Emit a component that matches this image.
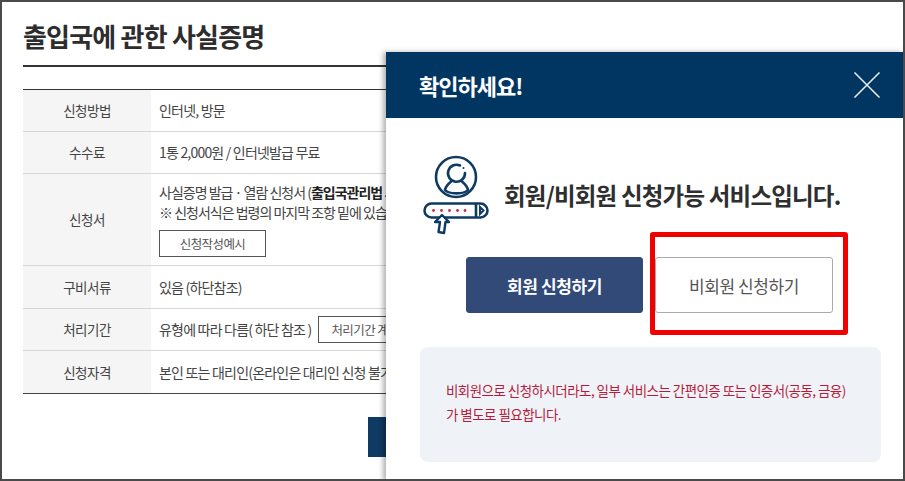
<script>
	const rows = [
		{ label: "신청방법", h: 42 },
		{ label: "수수료", h: 42 },
		{ label: "신청서", h: 92 },
		{ label: "구비서류", h: 43 },
		{ label: "처리기간", h: 42 },
		{ label: "신청자격", h: 43 }
	];
</script>

<div class="page">
	<main class="content">
		<h1>출입국에 관한 사실증명</h1>
		<div class="table">
			<div class="row r0">
				<div class="th">{rows[0].label}</div>
				<div class="td">인터넷, 방문</div>
			</div>
			<div class="row r1">
				<div class="th">{rows[1].label}</div>
				<div class="td">1통 2,000원 / 인터넷발급 무료</div>
			</div>
			<div class="row r2">
				<div class="th">{rows[2].label}</div>
				<div class="td stack">
					<p>사실증명 발급 · 열람 신청서 (<b>출입국관리법 시행규칙</b>)</p>
					<p>※ 신청서식은 법령의 마지막 조항 밑에 있습니다.</p>
					<button class="small">신청작성예시</button>
				</div>
			</div>
			<div class="row r3">
				<div class="th">{rows[3].label}</div>
				<div class="td">있음 (하단참조)</div>
			</div>
			<div class="row r4">
				<div class="th">{rows[4].label}</div>
				<div class="td">유형에 따라 다름( 하단 참조 )<button class="small calc">처리기간 계산하기</button></div>
			</div>
			<div class="row r5">
				<div class="th">{rows[5].label}</div>
				<div class="td">본인 또는 대리인(온라인은 대리인 신청 불가)</div>
			</div>
		</div>
		<div class="submit"></div>
	</main>

	<section class="modal">
		<header>
			<h2>확인하세요!</h2>
			<svg class="close" width="28" height="28" viewBox="0 0 28 28">
				<path d="M1.5 1.5 L26.5 26.5 M26.5 1.5 L1.5 26.5" stroke="#e4ebf2" stroke-width="1.6" fill="none" />
			</svg>
		</header>
		<div class="body">
			<div class="notice">
				<svg class="icon" width="68" height="80" viewBox="0 0 68 80" fill="none" stroke="#0f3a63" stroke-width="2.6">
					<circle cx="33" cy="22" r="20" />
					<!-- head with a gap at the upper right, then the shoulders -->
					<path d="M37 10.500 A8.500 8.500 0 1 0 42 18" stroke-linecap="round" />
					<circle cx="40.500" cy="13" r="1" fill="#0f3a63" stroke="none" />
					<path d="M28 26.500 C25 29 22.500 31 22 35 C26 39.500 41 39.500 45 35 C44.500 31 42 29 39 26.500" stroke-linecap="round" />
					<rect x="1.500" y="48.500" width="63" height="14" rx="7" />
					<path d="M53 49 v13" />
					<path d="M57 52 l3.500 3.500 l-3.500 3.500 z" stroke-width="2" />
					<g fill="#c8284c" stroke="none">
						<circle cx="10.500" cy="55.500" r="1.400" />
						<circle cx="18.500" cy="55.500" r="1.400" />
						<circle cx="26.500" cy="55.500" r="1.400" />
						<circle cx="34.500" cy="55.500" r="1.400" />
						<circle cx="42" cy="55.500" r="1.400" />
					</g>
					<path d="M19 60 L26 67 H22.500 L21 78 L15.500 77 L17 67 H12 Z" fill="#fff" stroke-linejoin="round" stroke-width="2.400" />
				</svg>
				<p>회원/비회원 신청가능 서비스입니다.</p>
			</div>
			<div class="actions">
				<button class="primary">회원 신청하기</button>
				<button class="outline">비회원 신청하기</button>
			</div>
			<div class="info">
				<p>비회원으로 신청하시더라도, 일부 서비스는 간편인증 또는 인증서(공동, 금융)<br />가 별도로 필요합니다.</p>
			</div>
		</div>
	</section>

	<div class="highlight"></div>
</div>

<style>
	:global(body) {
		margin: 0;
		background: #fff;
	}

	.page {
		position: relative;
		width: 905px;
		height: 481px;
		box-sizing: border-box;
		border: 2px solid #4a4a4a;
		overflow: hidden;
		font-family: "Noto Sans CJK KR", "Noto Sans", sans-serif;
		color: #333;
		background: #fff;
	}

	.content {
		width: 363px;
		padding: 0 0 0 21px;
	}

	h1 {
		margin: 0;
		height: 65px;
		box-sizing: border-box;
		border-bottom: 2px solid #333;
		padding-top: 16px;
		font-size: 26px;
		line-height: 36px;
		font-weight: 700;
		letter-spacing: -0.8px;
		color: #2d2d2d;
		white-space: nowrap;
	}

	.table {
		margin-top: 22px;
		border-top: 1px solid #333;
		border-bottom: 1px solid #444;
	}

	.row {
		display: flex;
		border-bottom: 1px solid #d6d6d6;
		box-sizing: border-box;
	}

	.row:last-child {
		border-bottom: none;
	}

	.r0 { height: 42px; }
	.r1 { height: 42px; }
	.r2 { height: 92px; }
	.r3 { height: 43px; }
	.r4 { height: 42px; }
	.r5 { height: 42px; }

	.th {
		flex: 0 0 128px;
		display: flex;
		align-items: center;
		justify-content: center;
		padding-bottom: 1px;
		box-sizing: border-box;
		background: #f5f5f5;
		font-size: 13.500px;
		letter-spacing: -0.5px;
		color: #444;
	}

	.td {
		flex: 1;
		display: flex;
		align-items: center;
		padding-left: 8px;
		padding-bottom: 1px;
		font-size: 14px;
		letter-spacing: -0.8px;
		color: #444;
		white-space: nowrap;
		min-width: 0;
	}

	.stack {
		flex-direction: column;
		align-items: flex-start;
		justify-content: flex-start;
		padding-top: 8px;
		box-sizing: border-box;
	}

	.stack p {
		margin: 0;
		line-height: 20px;
		height: 20px;
		letter-spacing: -1px;
	}

	.stack b {
		font-weight: 700;
		color: #222;
	}

	.small {
		flex: none;
		box-sizing: border-box;
		width: 107px;
		height: 27px;
		margin-top: 8px;
		padding: 0;
		background: #fff;
		border: 1px solid #555;
		font: inherit;
		font-size: 12.500px;
		letter-spacing: -0.6px;
		color: #555;
	}

	.calc {
		width: 120px;
		margin: 1px 0 0 7px;
		text-align: left;
		padding-left: 12px;
		white-space: nowrap;
		overflow: hidden;
	}

	.submit {
		position: absolute;
		left: 366px;
		top: 415px;
		width: 20px;
		height: 40px;
		background: #0f3a63;
	}

	.modal {
		position: absolute;
		left: 384px;
		top: 50px;
		width: 518px;
		height: 429px;
		background: #fff;
		box-shadow: -3px 0 5px rgba(0, 0, 0, 0.3);
	}

	header {
		height: 66px;
		display: flex;
		align-items: center;
		justify-content: space-between;
		padding: 0 23px 0 33px;
		background: #023662;
	}

	h2 {
		margin: 0;
		font-size: 22px;
		font-weight: 700;
		letter-spacing: -1px;
		color: #fff;
	}

	.body {
		padding: 37px 23px 0 34px;
	}

	.notice {
		display: flex;
		align-items: flex-start;
		height: 102px;
	}

	.icon {
		flex: none;
		margin-left: 3px;
	}

	.notice p {
		margin: 25px 0 0 13px;
		font-size: 23.500px;
		line-height: 30px;
		font-weight: 700;
		letter-spacing: -0.8px;
		color: #2f2f2f;
		white-space: nowrap;
	}

	.actions {
		display: flex;
		gap: 12px;
		padding-left: 46px;
	}

	.actions button {
		box-sizing: border-box;
		height: 56px;
		border-radius: 3px;
		font: inherit;
		font-size: 17px;
		letter-spacing: -0.4px;
		padding: 0;
	}

	.actions .primary {
		width: 177px;
		background: #314a77;
		border: 1px solid #314a77;
		color: #fff;
		font-weight: 700;
	}

	.outline {
		width: 178px;
		background: #fff;
		border: 1px solid #aaa;
		color: #555;
	}

	.info {
		margin-top: 34px;
		box-sizing: border-box;
		height: 115px;
		padding: 31px 0 0 26px;
		background: #eff3f8;
		border-radius: 8px;
	}

	.info p {
		margin: 0;
		font-size: 13.500px;
		line-height: 24px;
		letter-spacing: -0.55px;
		color: #b81a3a;
		white-space: nowrap;
	}

	.highlight {
		position: absolute;
		left: 648px;
		top: 230px;
		width: 198px;
		height: 103px;
		box-sizing: border-box;
		border: 5px solid #f00000;
		border-radius: 3px;
		pointer-events: none;
	}
</style>
